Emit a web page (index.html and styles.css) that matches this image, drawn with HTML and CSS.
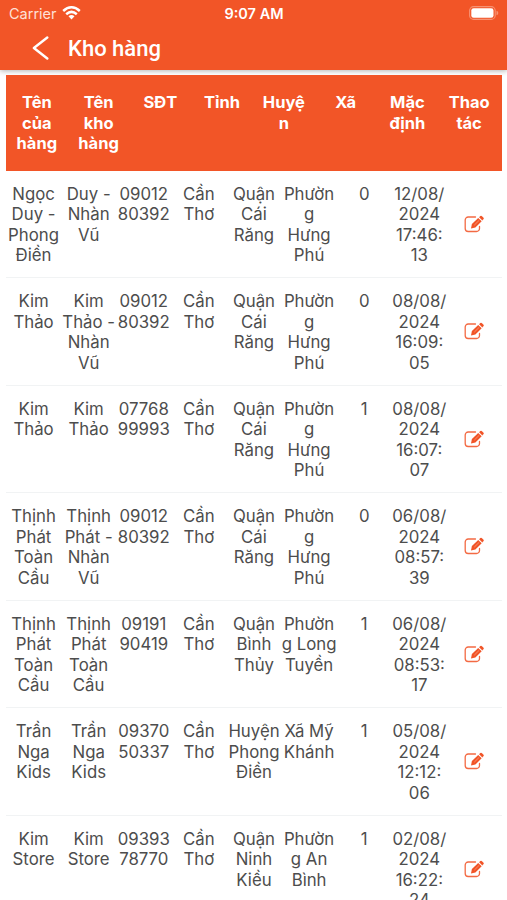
FILE: index.html
```html
<!DOCTYPE html>
<html lang="vi">
<head>
<meta charset="utf-8">
<title>Kho hàng</title>
<link rel="stylesheet" href="styles.css">
</head>
<body>
<svg class="defs" width="0" height="0">
  <symbol id="edit" viewBox="0 0 20 18">
    <path d="M11.500 2H4.200A3 3 0 0 0 1.200 5v8.500a3 3 0 0 0 3 3H12.500a3 3 0 0 0 3-3V11.500" fill="none" stroke="#f36a43" stroke-width="1.300" stroke-linecap="round"/>
    <path d="M7 13.500 7.900 8.900 14.200 2.900 17.700 6.300 11.400 12.500Z" fill="#f15427"/>
    <path d="M15.100 2.200 16.300 1.100Q17.200.5 18 1.200L19.500 2.700Q20.100 3.500 19.400 4.300L18.400 5.400Z" fill="#f15427"/>
    <path d="M10.300 10.100 15.200 5.300" stroke="#f9a78e" stroke-width=".7"/>
  </symbol>
</svg>
<div class="screen">
  <header class="top">
    <div class="status">
      <div class="carrier"><span>Carrier</span>
        <svg width="19" height="14" viewBox="0 0 19 14" fill="none" stroke="#fff" stroke-width="2.500">
          <path d="M1.200 5Q9.500-2.400 17.800 5M4.200 8.200Q9.500 3.600 14.800 8.200"/>
          <path d="M6.500 10.300Q9.500 7.900 12.500 10.300L9.500 13.400Z" fill="#fff" stroke="none"/>
        </svg>
      </div>
      <div class="time">9:07 AM</div>
      <div class="power">
        <svg width="30" height="14" viewBox="0 0 30 14">
          <rect x=".6" y=".6" width="25.600" height="12.800" rx="4" fill="none" stroke="#f79273" stroke-width="1.100"/>
          <rect x="2.300" y="2.300" width="22.200" height="9.400" rx="2.300" fill="#fff"/>
          <path d="M27.500 4.700Q29.300 5.300 29.300 7T27.500 9.300Z" fill="#f79273"/>
        </svg>
      </div>
    </div>
    <div class="nav">
      <svg width="18" height="24" viewBox="0 0 18 24"><path d="M15.300 1.500 1.900 12 15.300 22.500" fill="none" stroke="#fff" stroke-width="2.400" stroke-linecap="round" stroke-linejoin="round"/></svg>
      <h1>Kho hàng</h1>
    </div>
  </header>
  <main class="table">
    <div class="head">
      <div>Tên<br>của<br>hàng</div><div>Tên<br>kho<br>hàng</div><div>SĐT</div><div>Tỉnh</div><div>Huyệ<br>n</div><div>Xã</div><div>Mặc<br>định</div><div>Thao<br>tác</div>
    </div>
    <div id="rows"></div>
  </main>
</div>
<script src="rows.js"></script>
</body>
</html>
```
FILE: rows.js
```js
const warehouses = [
  ["Ngọc|Duy -|Phong|Điền", "Duy -|Nhàn|Vũ", "09012|80392", "Cần|Thơ", "Quận|Cái|Răng", "Phườn|g|Hưng|Phú", "0", "12/08/|2024|17:46:|13"],
  ["Kim|Thảo", "Kim|Thảo -|Nhàn|Vũ", "09012|80392", "Cần|Thơ", "Quận|Cái|Răng", "Phườn|g|Hưng|Phú", "0", "08/08/|2024|16:09:|05"],
  ["Kim|Thảo", "Kim|Thảo", "07768|99993", "Cần|Thơ", "Quận|Cái|Răng", "Phườn|g|Hưng|Phú", "1", "08/08/|2024|16:07:|07"],
  ["Thịnh|Phát|Toàn|Cầu", "Thịnh|Phát -|Nhàn|Vũ", "09012|80392", "Cần|Thơ", "Quận|Cái|Răng", "Phườn|g|Hưng|Phú", "0", "06/08/|2024|08:57:|39"],
  ["Thịnh|Phát|Toàn|Cầu", "Thịnh|Phát|Toàn|Cầu", "09191|90419", "Cần|Thơ", "Quận|Bình|Thủy", "Phườn|g Long|Tuyền", "1", "06/08/|2024|08:53:|17"],
  ["Trần|Nga|Kids", "Trần|Nga|Kids", "09370|50337", "Cần|Thơ", "Huyện|Phong|Điền", "Xã Mỹ|Khánh", "1", "05/08/|2024|12:12:|06"],
  ["Kim|Store", "Kim|Store", "09393|78770", "Cần|Thơ", "Quận|Ninh|Kiều", "Phườn|g An|Bình", "1", "02/08/|2024|16:22:|24"]
];

const editCell = '<div class="edit"><svg width="20" height="18"><use href="#edit"/></svg></div>';

document.getElementById("rows").innerHTML = warehouses
  .map(row => '<div class="row">' + row.map(cell => `<div>${cell.replaceAll("|", "<br>")}</div>`).join("") + editCell + "</div>")
  .join("");
```
FILE: styles.css
```css
* { box-sizing: border-box; }
body {
  margin: 0;
  background: #fff;
  color: #4d4d4d;
  font-family: Inter, "Liberation Sans", sans-serif;
}
.defs { display: block; }
.screen { height: 900px; overflow: hidden; }
.top {
  height: 70px;
  background: #f25527;
  color: #fff;
  box-shadow: 0 1px 5px rgba(0, 0, 0, .3);
}
.status {
  display: grid;
  grid-template-columns: 1fr auto 1fr;
  align-items: center;
  height: 27px;
  padding: 0 8px 0 9px;
  font-size: 14.500px;
}
.carrier { display: flex; align-items: center; gap: 5px; color: #ffe0d6; }
.carrier svg { margin-top: -2px; }
.time { font-weight: 600; }
.power { display: flex; justify-content: flex-end; margin-top: -1px; }
.nav { display: flex; align-items: center; height: 42px; padding-left: 32px; gap: 18px; }
.nav h1 {
  margin: 0;
  font-family: Roboto, sans-serif;
  font-size: 22px;
  font-weight: 500;
}
.table { margin: 5px 5px 0 6px; }
.head {
  display: grid;
  grid-template-columns: repeat(8, 1fr);
  height: 95.500px;
  padding: 17px 2px 0 0;
  background: #f25527;
  color: #fff;
  font-size: 16.500px;
  font-weight: 700;
  line-height: 20.600px;
  text-align: center;
}
.row {
  display: grid;
  grid-template-columns: repeat(9, 1fr);
  height: 107.500px;
  padding: 13px 0 0;
  border-bottom: 1px solid #f1f3f4;
  font-size: 16.800px;
  line-height: 20.500px;
  text-align: center;
  white-space: nowrap;
}
.row > div { min-width: 0; display: flow-root; }
.row > .edit { display: flex; justify-content: center; padding-top: 31px; }
```
